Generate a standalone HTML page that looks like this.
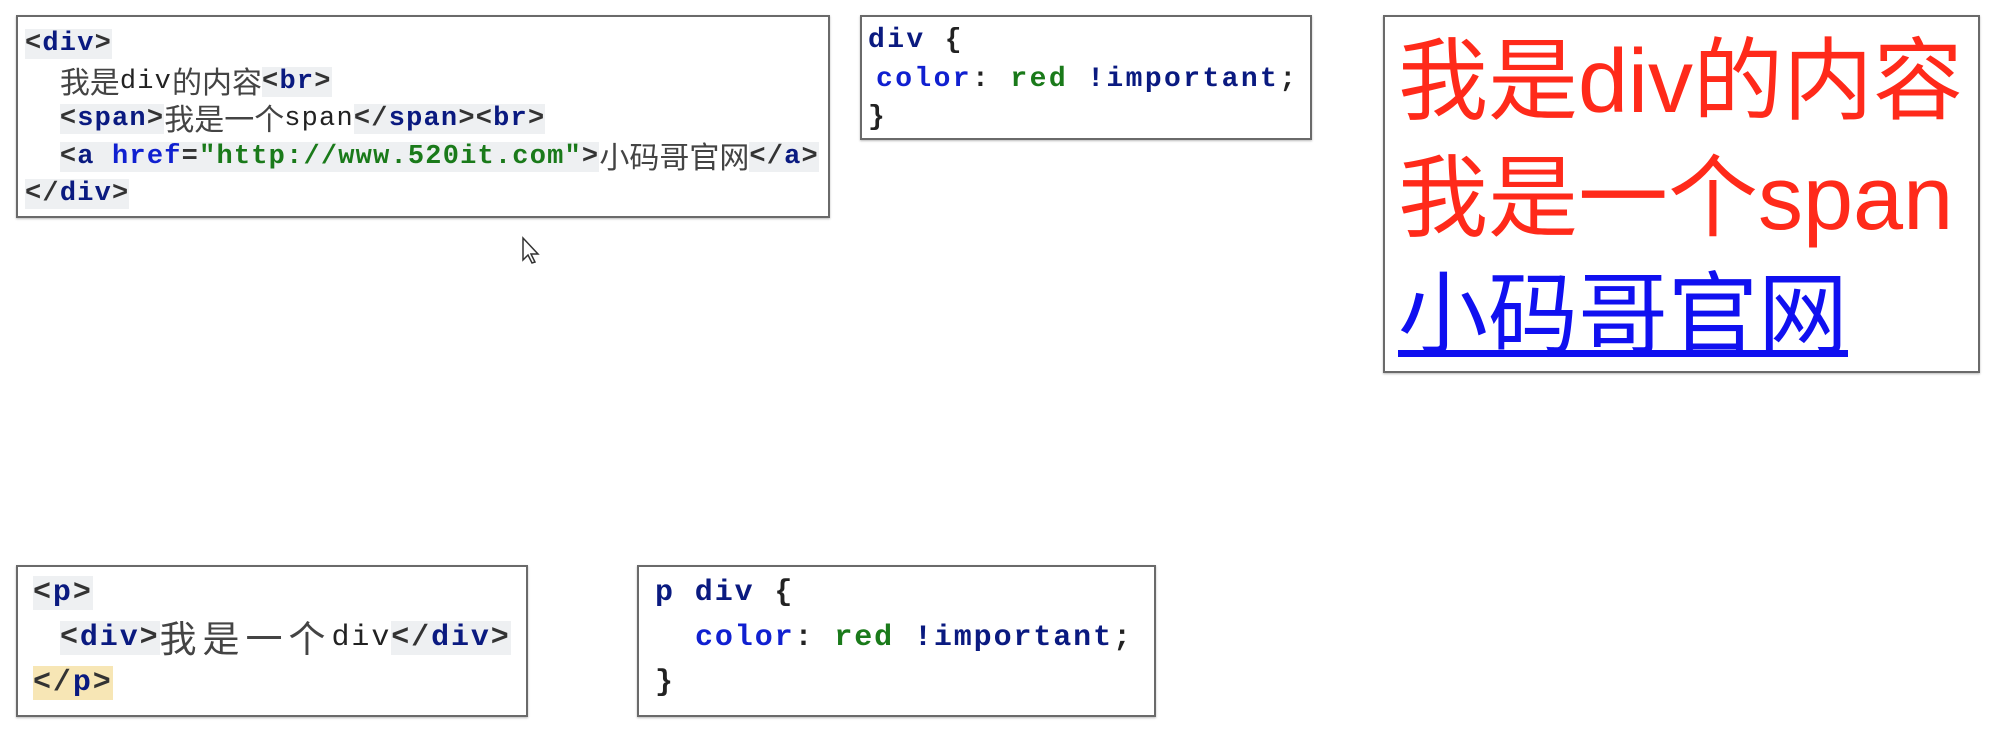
<!DOCTYPE html>
<html><head><meta charset="utf-8"><style>
body{margin:0;width:1990px;height:730px;background:#fff;position:relative;overflow:hidden}
.box{position:absolute;border:2px solid #6a6a6a;box-shadow:0 1px 2px #bbb;background:#fff;box-sizing:border-box}
.code{position:absolute;font-family:"Liberation Mono","Noto Sans CJK SC",monospace;white-space:normal;color:#222}
.code>div{overflow:visible;white-space:pre}
.c1{font-size:27px;letter-spacing:1.2px}
.c1>div{height:37.5px;line-height:37.5px}
.c3{font-size:28px;letter-spacing:2.4px;font-weight:bold}
.c3>div{height:38.5px;line-height:38.5px}
.c2{font-size:30px;letter-spacing:1.9px;font-weight:bold}
.c2>div{height:45px;line-height:45px}
.t{color:#0a1a80;font-weight:bold}
.b{color:#333;font-weight:bold}
.hl{background:#eef0f2}
.y{background:#f7e6b5}
.at{color:#1020d0;font-weight:bold}
.s{color:#1a7a1a;font-weight:bold}
.pr{color:#1020d0}
.v{color:#1a7a1a;font-weight:bold}
.im{color:#0a1a80;font-weight:bold}
.cj{font-family:"Noto Sans CJK SC",sans-serif;font-weight:normal;color:#444;letter-spacing:0;font-size:30px;line-height:0;position:relative;top:5px}
.c2 .cj{font-size:37px;letter-spacing:6px;top:7px}
.big{position:absolute;left:1398px;top:24px;font-family:"Liberation Sans","Noto Sans CJK SC",sans-serif;font-size:90px;white-space:nowrap}
.big div{height:117px;line-height:117px}
</style></head><body>
<div class="box" style="left:16px;top:15px;width:814px;height:203px"></div>
<div class="code c1" style="left:25px;top:26px"><div><span class="hl"><span class="b">&lt;</span><span class="t">div</span><span class="b">&gt;</span></span></div><div>  <span class="cj">我是</span>div<span class="cj">的内容</span><span class="hl"><span class="b">&lt;</span><span class="t">br</span><span class="b">&gt;</span></span></div><div>  <span class="hl"><span class="b">&lt;</span><span class="t">span</span><span class="b">&gt;</span></span><span class="cj">我是一个</span>span<span class="hl"><span class="b">&lt;/</span><span class="t">span</span><span class="b">&gt;&lt;</span><span class="t">br</span><span class="b">&gt;</span></span></div><div>  <span class="hl"><span class="b">&lt;</span><span class="t">a</span> <span class="at">href</span><span class="b">=</span><span class="s">"http://www.520it.com"</span><span class="b">&gt;</span></span><span class="cj">小码哥官网</span><span class="hl"><span class="b">&lt;/</span><span class="t">a</span><span class="b">&gt;</span></span></div><div><span class="hl"><span class="b">&lt;/</span><span class="t">div</span><span class="b">&gt;</span></span></div></div>

<div class="box" style="left:860px;top:15px;width:452px;height:125px"></div>
<div class="code c3" style="left:868px;top:22px"><div><span class="t">div</span> {</div><div style="padding-left:8px"><span class="pr">color</span>: <span class="v">red</span> <span class="im">!important</span>;</div><div>}</div></div>

<div class="box" style="left:1383px;top:15px;width:597px;height:358px"></div>
<div class="big"><div style="color:#ff2a1a">我是div的内容</div><div style="color:#ff2a1a">我是一个span</div><div><span style="color:#1010f0;text-decoration:underline;text-decoration-thickness:7px;text-underline-offset:4px">小码哥官网</span></div></div>

<svg style="position:absolute;left:520px;top:236px" width="22" height="30" viewBox="0 0 22 30"><path d="M3 2 L3 24 L8 19 L12 27 L15 26 L11 18 L18 18 Z" fill="#fff" stroke="#333" stroke-width="1.5"/></svg>

<div class="box" style="left:16px;top:565px;width:512px;height:152px"></div>
<div class="code c2" style="left:33px;top:571px"><div><span class="hl"><span class="b">&lt;</span><span class="t">p</span><span class="b">&gt;</span></span></div><div style="padding-left:27px"><span class="hl"><span class="b">&lt;</span><span class="t">div</span><span class="b">&gt;</span></span><span class="cj">我是一个</span><span style="font-weight:normal">div</span><span class="hl"><span class="b">&lt;/</span><span class="t">div</span><span class="b">&gt;</span></span></div><div><span class="y"><span class="b">&lt;/</span><span class="t">p</span><span class="b">&gt;</span></span></div></div>

<div class="box" style="left:637px;top:565px;width:519px;height:152px"></div>
<div class="code c2" style="left:655px;top:571px"><div><span class="t">p div</span> {</div><div style="padding-left:40px"><span class="pr">color</span>: <span class="v">red</span> <span class="im">!important</span>;</div><div>}</div></div>
</body></html>
